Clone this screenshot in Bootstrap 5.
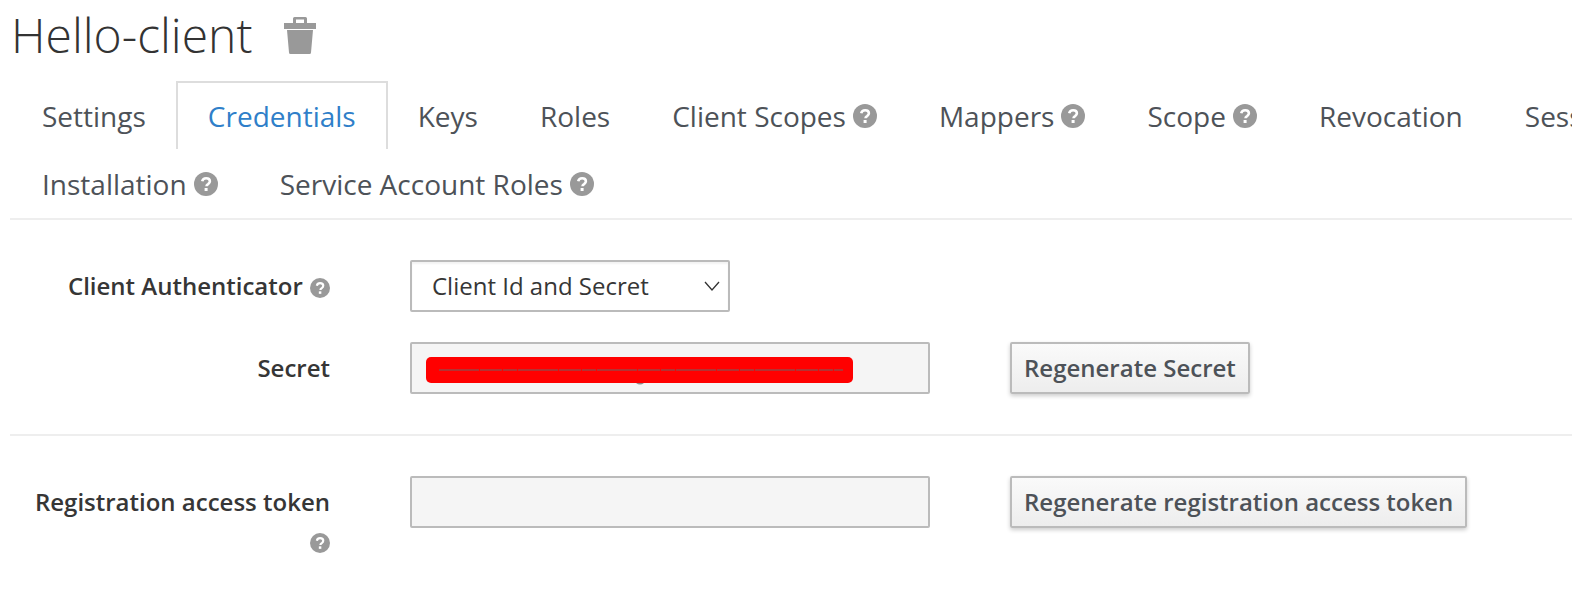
<!DOCTYPE html>
<html lang="en">
<head>
<meta charset="utf-8">
<title>Hello-client</title>
<link rel="stylesheet" href="https://cdn.jsdelivr.net/npm/bootstrap@5.3.0/dist/css/bootstrap.min.css">
<style>
html, body { overflow: hidden; background: #fff; }
body { font-family: "Open Sans", sans-serif; color: #363636; }
.page-wrap { padding-left: 10px; width: 1700px; }
.client-title { font-family: "Open Sans", sans-serif; font-weight: 300; font-size: 48px; line-height: 62px; color: #333; margin: 4px 0 15px 1px; gap: 32px; }
.trash-ico { width: 32px; height: 37px; fill: #999; }
.help-ico { width: 24px; height: 24px; flex: none; }
.help-sm { width: 20px; height: 20px; flex: none; }
.kc-tabs { width: 1700px; border-bottom: 2px solid #eee; padding: 0 0 1px 1px; --bs-nav-tabs-border-width: 0; }
.kc-tabs .nav-link { font-size: 28px; line-height: 36px; color: #4d5258; padding: 16px 29px; height: 68px; border: 2px solid transparent; border-bottom: 0; border-radius: 0; margin: 0; display: flex; align-items: center; gap: 7px; background: transparent; }
.kc-tabs .nav-link.active { color: #2f7fc9; border-color: #ddd; background: #fff; padding: 16px 30px; margin: 0 -1px; }
.kc-form { width: 1562px; padding-top: 40px; }
.kc-row { display: flex; align-items: flex-start; }
.kc-label { width: 320px; flex: none; text-align: right; font-size: 24px; font-weight: 600; color: #363636; line-height: 32px; padding-top: 10px; }
.kc-label .help-sm { margin-left: 1px; vertical-align: -3px; }
.kc-field { width: 520px; margin-left: 80px; flex: none; position: relative; }
.kc-input, .kc-input:disabled, .kc-input[readonly] { height: 52px; border: 2px solid #bbb; border-radius: 2px; background: #f5f5f5; box-shadow: none; }
.kc-select { width: 320px; height: 52px; border: 2px solid #bbb; border-radius: 2px; font-size: 24px; color: #363636; padding: 0 40px 0 20px; background-color: #fff; background-size: 18px 12px; background-position: right 7px center; background-image: url("data:image/svg+xml,%3csvg xmlns='http://www.w3.org/2000/svg' viewBox='0 0 18 12'%3e%3cpath fill='none' stroke='%23333' stroke-width='1.3' d='M2 2l7 8 7-8'/%3e%3c/svg%3e"); box-shadow: inset 0 2px 2px rgba(0,0,0,.05); }
.scribble { position: absolute; left: 15px; top: 13px; width: 432px; height: 32px; }
.kc-btn, .kc-btn:hover { margin-left: 80px; height: 52px; padding: 0 12px; border: 2px solid #bbb; border-radius: 2px; font-size: 24px; font-weight: 600; color: #4d5258; background: linear-gradient(#fafafa, #ededed); box-shadow: 0 2px 4px rgba(0,0,0,.2); white-space: nowrap; }
.kc-rule { margin: 0; border: 0; border-top: 2px solid #eee; opacity: 1; }
.kc-secret { margin-top: 30px; margin-bottom: 40px; }
.kc-token { margin-top: 40px; }
.kc-token .help-sm { margin-top: 15px; }
</style>
</head>
<body>
<svg width="0" height="0" class="d-block position-absolute">
  <symbol id="help" viewBox="0 0 24 24">
    <circle cx="12" cy="12" r="12" fill="#999"/>
    <path d="M8.200 9.200c.5-2 2-3 3.900-3 2.200 0 3.800 1.300 3.800 3.100 0 1.400-.8 2.100-1.800 2.800-.9.600-1.600 1.100-1.600 2.200" fill="none" stroke="#fff" stroke-width="2.600"/>
    <rect x="10.600" y="16" width="3" height="3" fill="#fff"/>
  </symbol>
</svg>
<div class="page-wrap">
  <h1 class="client-title d-flex align-items-center">
    <span>Hello-client</span>
    <svg class="trash-ico" viewBox="0 0 32 37" aria-label="Delete"><path d="M9 6V1.500A1.500 1.500 0 0 1 10.500 0h11A1.500 1.500 0 0 1 23 1.500V6h9v6H0V6zm3-3.500V6h8V2.500z"/><path d="M3 13h26l-2 22.500a1.500 1.500 0 0 1-1.500 1.500h-19A1.500 1.500 0 0 1 5 35.500z"/></svg>
  </h1>
  <ul class="nav nav-tabs kc-tabs">
    <li class="nav-item"><a class="nav-link" href="#">Settings</a></li>
    <li class="nav-item"><a class="nav-link active" href="#">Credentials</a></li>
    <li class="nav-item"><a class="nav-link" href="#">Keys</a></li>
    <li class="nav-item"><a class="nav-link" href="#">Roles</a></li>
    <li class="nav-item"><a class="nav-link" href="#">Client Scopes <svg class="help-ico"><use href="#help"/></svg></a></li>
    <li class="nav-item"><a class="nav-link" href="#">Mappers <svg class="help-ico"><use href="#help"/></svg></a></li>
    <li class="nav-item"><a class="nav-link" href="#">Scope <svg class="help-ico"><use href="#help"/></svg></a></li>
    <li class="nav-item"><a class="nav-link" href="#">Revocation</a></li>
    <li class="nav-item"><a class="nav-link" href="#">Sessions</a></li>
    <li class="w-100"></li>
    <li class="nav-item"><a class="nav-link" href="#">Installation <svg class="help-ico"><use href="#help"/></svg></a></li>
    <li class="nav-item"><a class="nav-link" href="#">Service Account Roles <svg class="help-ico"><use href="#help"/></svg></a></li>
  </ul>
  <form class="kc-form">
    <div class="kc-row">
      <label class="kc-label">Client Authenticator <svg class="help-sm"><use href="#help"/></svg></label>
      <div class="kc-field">
        <select class="form-select kc-select"><option>Client Id and Secret</option></select>
      </div>
    </div>
    <div class="kc-row kc-secret">
      <label class="kc-label">Secret</label>
      <div class="kc-field">
        <input class="form-control kc-input" readonly>
        <svg class="scribble" viewBox="0 0 432 32" aria-hidden="true">
          <path d="M211 28q4 3 8 0z" fill="#888"/>
          <rect x="1" y="2" width="427" height="26" rx="5" fill="#f00"/>
          <line x1="14" y1="15" x2="418" y2="15" stroke="#666" stroke-width="1" stroke-dasharray="40 1 22 1 14 1"/>
        </svg>
      </div>
      <button type="button" class="btn kc-btn">Regenerate Secret</button>
    </div>
    <hr class="kc-rule">
    <div class="kc-row kc-token">
      <label class="kc-label">Registration access token<br><svg class="help-sm"><use href="#help"/></svg></label>
      <div class="kc-field">
        <input class="form-control kc-input" disabled>
      </div>
      <button type="button" class="btn kc-btn">Regenerate registration access token</button>
    </div>
  </form>
</div>
<script src="https://cdn.jsdelivr.net/npm/bootstrap@5.3.0/dist/js/bootstrap.bundle.min.js"></script>
</body>
</html>
